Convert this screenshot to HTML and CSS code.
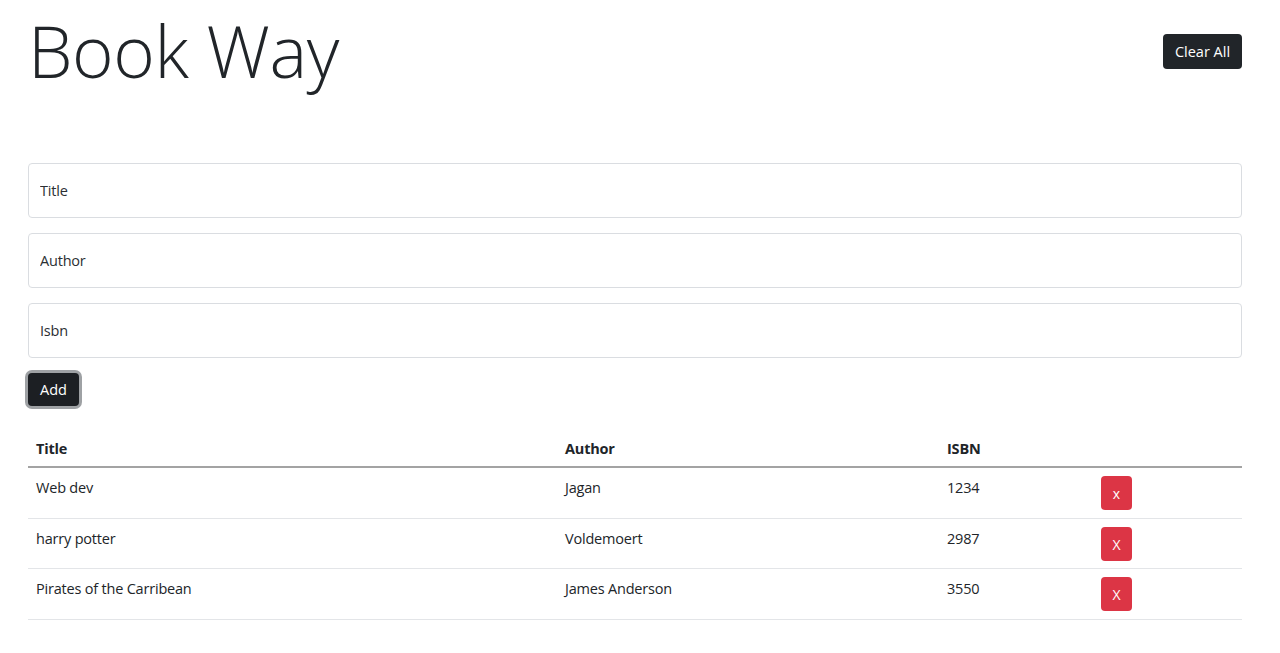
FILE: index.html
```html
<!DOCTYPE html>
<html lang="en">
<head>
<meta charset="utf-8">
<title>Book Way</title>
<link rel="stylesheet" href="styles.css">
</head>
<body>
<div class="page">
  <header class="top">
    <h1 class="brand">Book Way</h1>
    <button class="btn btn-dark btn-clear" type="button">Clear All</button>
  </header>

  <form class="book-form">
    <input class="field" type="text" placeholder="Title">
    <input class="field" type="text" placeholder="Author">
    <input class="field" type="text" placeholder="Isbn">
    <div class="actions">
      <button class="btn btn-dark btn-add" type="button">Add</button>
    </div>
  </form>

  <table class="books">
    <colgroup>
      <col class="c-title">
      <col class="c-author">
      <col class="c-isbn">
      <col class="c-act">
    </colgroup>
    <thead>
      <tr><th>Title</th><th>Author</th><th>ISBN</th><th></th></tr>
    </thead>
    <tbody>
      <tr><td>Web dev</td><td>Jagan</td><td>1234</td><td><button class="btn btn-del" type="button">x</button></td></tr>
      <tr><td>harry potter</td><td>Voldemoert</td><td>2987</td><td><button class="btn btn-del" type="button">X</button></td></tr>
      <tr><td>Pirates of the Carribean</td><td>James Anderson</td><td>3550</td><td><button class="btn btn-del" type="button">X</button></td></tr>
    </tbody>
  </table>
</div>
</body>
</html>
```

FILE: styles.css
```css
* { box-sizing: border-box; }

body {
  margin: 0;
  font-family: "Open Sans", "Noto Sans", sans-serif;
  font-size: 14.5px;
  letter-spacing: -0.2px;
  line-height: 24px;
  color: #212529;
  background: #fff;
}

.page {
  padding: 0 38px 0 28px;
}

.top {
  display: flex;
  justify-content: space-between;
  align-items: flex-start;
  height: 163px;
}

.brand {
  margin: 6px 0 0 0;
  font-family: "Open Sans", sans-serif;
  font-weight: 300;
  font-size: 71px;
  line-height: 90px;
  letter-spacing: -0.4px;
}

.btn {
  font-family: inherit;
  font-size: 14.5px;
  letter-spacing: 0;
  border: 0;
  border-radius: 4px;
  cursor: pointer;
}

.btn-dark {
  background: #212529;
  color: #fff;
}

.btn-clear {
  margin-top: 34px;
  height: 35px;
  width: 79px;
  padding: 0;
}

.book-form {
  display: flex;
  flex-direction: column;
  gap: 15px;
}

.field {
  display: block;
  width: 100%;
  height: 55px;
  padding: 0 11px;
  font-family: inherit;
  font-size: 14.5px;
  letter-spacing: -0.2px;
  color: #212529;
  border: 1px solid #dadde1;
  border-radius: 4px;
  background: #fff;
}

.field::placeholder {
  color: #2b2f33;
}

.actions {
  margin-top: 0;
}

.btn-add {
  margin: 0;
  width: 51px;
  height: 33px;
  padding: 0;
  background: #1c1f23;
  box-shadow: 0 0 0 3px #9ea1a4;
}

.books {
  width: 100%;
  margin-top: 22px;
  border-collapse: collapse;
  table-layout: fixed;
}

.c-title { width: 529px; }
.c-author { width: 382px; }
.c-isbn { width: 154px; }

.books th,
.books td {
  text-align: left;
  vertical-align: top;
  padding: 8px;
}

.books th {
  font-weight: 700;
  padding-top: 9px;
  padding-bottom: 5px;
  border-bottom: 2px solid #a3a3a3;
}

.books td {
  border-bottom: 1px solid #e3e5e8;
}

.books tbody tr:nth-child(2) td {
  padding-bottom: 7px;
}

.btn-del {
  width: 31px;
  height: 34px;
  padding: 0;
  background: #dc3545;
  color: #fff;
  font-size: 14px;
}
```
